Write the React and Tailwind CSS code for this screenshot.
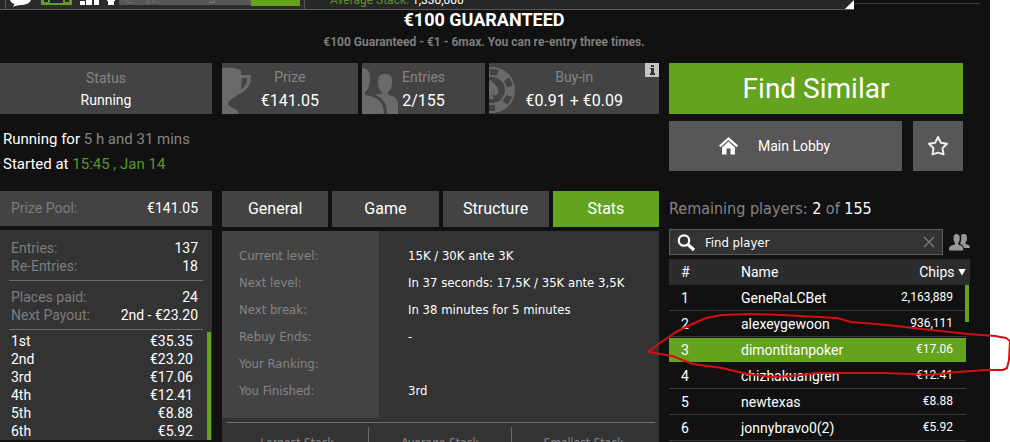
const payouts = [
  ["1st", "€35.35"],
  ["2nd", "€23.20"],
  ["3rd", "€17.06"],
  ["4th", "€12.41"],
  ["5th", "€8.88"],
  ["6th", "€5.92"],
];

const levels = [
  ["Current level:", "15K / 30K ante 3K"],
  ["Next level:", "In 37 seconds: 17,5K / 35K ante 3,5K"],
  ["Next break:", "In 38 minutes for 5 minutes"],
  ["Rebuy Ends:", "-"],
  ["Your Ranking:", ""],
  ["You Finished:", "3rd"],
];

const players = [
  ["1", "GeneRaLCBet", "2,163,889"],
  ["2", "alexeygewoon", "936,111"],
  ["3", "dimontitanpoker", "€17.06"],
  ["4", "chizhakuangren", "€12.41"],
  ["5", "newtexas", "€8.88"],
  ["6", "jonnybravo0(2)", "€5.92"],
];

function TopBar() {
  return (
    <div className="flex h-[10px] items-start justify-between">
      <div className="flex h-[10px] w-[854px] items-end overflow-hidden border-b border-[#5a5a5a] bg-[#272727]">
        <div className="ml-[5px] flex h-[9px] w-[300px] items-start border-x border-[#555] bg-[#2b2b2b]">
          <svg className="ml-[3px] h-[9px] w-[24px]" viewBox="0 0 24 9" fill="#fff">
            <path d="M1 0h21c-1 3-5 5-11 5l-7 1.500 1.500-2.500C3 3 1.500 2 1 0z" />
          </svg>
          <svg className="ml-[8px] h-[9px] w-[31px]" viewBox="0 0 31 9">
            <path d="M0 0h31v5H0z" fill="#5fa01c" />
            <path d="M3 0h4v2H3zM9 0h13v3H9zM24 0h4v2h-4z" fill="#222" />
          </svg>
          <svg className="ml-[8px] h-[9px] w-[36px]" viewBox="0 0 36 9" fill="#fff">
            <path d="M0 1h5v4H0zM6 0h6v5H6zM14 0h5v5h-5zM28 0h6v5h-6zM27 0h8v1h-8z" />
          </svg>
          <input
            aria-label="Type a message"
            defaultValue="@ Type message here"
            className="-mt-[13px] ml-[3px] h-[18px] w-[132px] bg-[#585656] px-[5px] text-[13px] text-[#777] outline-none"
          />
          <button aria-label="Send" className="-mt-[13px] h-[19px] w-[49px] bg-[#63a31d]"></button>
        </div>
        <p className="ml-[25px] h-[9px] text-[12px] leading-[1px] text-white">
          <span className="text-[#5c8f26]">Average Stack:</span> 1,330,000
        </p>
        <svg className="ml-auto h-[9px] w-[9px]" viewBox="0 0 9 9">
          <path d="M9 0v9H0z" fill="#fff" />
        </svg>
      </div>
      <div className="mt-[3px] mr-[10px] h-px flex-1 bg-[#3c3c3c]"></div>
    </div>
  );
}

function Tile({ label, value, className, children }) {
  return (
    <div className={"relative h-[51px] overflow-hidden bg-[#434343] text-center " + className}>
      {children}
      <p className="mt-[4px] text-[14px] leading-[20px] text-[#858585]">{label}</p>
      <p className="mt-[3px] text-[16px] leading-[22px] text-white">{value}</p>
    </div>
  );
}

function Summary() {
  return (
    <section className="w-[212px] shrink-0">
      <div className="h-[51px] bg-[#434343] pt-[4px] text-center text-[14px]">
        <p className="leading-[22px] text-[#858585]">Status</p>
        <p className="leading-[23px] text-white">Running</p>
      </div>
      <div className="mt-[13px] mb-[14px] pl-[3px] text-[15px] leading-[25px] text-white">
        <p>Running for <span className="text-[#858585]">5 h and 31 mins</span></p>
        <p>Started at <span className="text-[#5c9626]">15:45 , Jan 14</span></p>
      </div>
      <div className="flex h-[35px] items-center justify-between bg-[#434343] pr-[14px] pl-[11px] text-[14px]">
        <span className="text-[#7d7d7d]">Prize Pool:</span>
        <span className="text-white">€141.05</span>
      </div>
      <div className="mt-[4px] bg-[#333] pt-[9px] text-[14px] leading-[18px] text-white">
        <dl className="mx-[9px] grid grid-cols-[auto_auto] justify-between border-b border-[#6c6c6c] pr-[5px] pb-[5px] pl-[2px]">
          <dt className="text-[#7d7d7d]">Entries:</dt>
          <dd className="text-right">137</dd>
          <dt className="text-[#7d7d7d]">Re-Entries:</dt>
          <dd className="text-right">18</dd>
        </dl>
        <dl className="mx-[9px] grid grid-cols-[auto_auto] justify-between border-b border-[#6c6c6c] pt-[7px] pr-[5px] pb-[5px] pl-[2px]">
          <dt className="text-[#7d7d7d]">Places paid:</dt>
          <dd className="text-right">24</dd>
          <dt className="text-[#7d7d7d]">Next Payout:</dt>
          <dd className="text-right">2nd - €23.20</dd>
        </dl>
        <div className="mt-[2px] mr-[1px] border-r-4 border-[#63a31d] pr-[14px] pl-[11px]">
          {payouts.map(([place, prize]) => (
            <div key={place} className="flex justify-between">
              <span>{place}</span>
              <span>{prize}</span>
            </div>
          ))}
        </div>
      </div>
    </section>
  );
}

function Details() {
  const tab = "h-[36px] flex-1 text-[16px] text-white ";
  return (
    <section className="min-w-0 flex-1">
      <div className="flex gap-[4px]">
        <Tile label="Prize" value="€141.05" className="flex-[136]">
          <svg className="absolute top-0 left-0 h-[51px] w-[32px]" viewBox="0 0 32 51" fill="#6a6a6a">
            <path d="M0 5c7-1 14 0 19 2v5h10c0 10-3 15-12 19-3 3-10 5-11 10 1 3 6 4 9 6l2 4H0z" />
            <path d="M20 15h5c0 5-2 9-6 11z" fill="#434343" />
          </svg>
        </Tile>
        <Tile label="Entries" value="2/155" className="flex-[124]">
          <svg className="absolute top-0 left-0 h-[51px] w-[37px]" viewBox="0 0 37 51" fill="#6a6a6a">
            <path d="M0 5c6 0 8 4 8 9 0 8-1 12-5 15v3c12 2 19 6 19 19H0z" />
            <path d="M16 18c0-5 2-7 7-7s7 2 7 7c0 6-1 9-4 11v3c7 1 10 4 10 9v10H25c0-10-3-16-12-19 2-1 5-1 7-1v-2c-3-2-4-5-4-10z" />
          </svg>
        </Tile>
        <Tile label="Buy-in" value="€0.91 + €0.09" className="flex-[170]">
          <svg className="absolute top-0 left-0 h-[51px] w-[28px]" viewBox="0 0 28 51" fill="none">
            <circle cx="3" cy="27" r="22" stroke="#6a6a6a" strokeWidth="2" />
            <circle cx="3" cy="27" r="18" stroke="#6a6a6a" strokeWidth="7" strokeDasharray="11 8" strokeDashoffset="5" />
            <circle cx="3" cy="27" r="14" stroke="#6a6a6a" strokeWidth="2" />
            <path d="M2 17c2 4 9 7 7 13-1 3-4 3-6 1l2 5H0V18z" fill="#6a6a6a" />
          </svg>
          <button aria-label="Info" className="absolute top-0 right-0 h-[14px] w-[14px] bg-[#c4c4c4]">
            <svg viewBox="0 0 14 14" fill="#333">
              <path d="M6 2h3v2H6zM5 5h4v5h1v2H5v-2h1V6H5z" />
            </svg>
          </button>
        </Tile>
      </div>

      <div className="mt-[77px] flex gap-[4px]">
        <button className={tab + "bg-[#434343]"}>General</button>
        <button className={tab + "bg-[#434343]"}>Game</button>
        <button className={tab + "bg-[#434343]"}>Structure</button>
        <button className={tab + "bg-[#63a31d]"}>Stats</button>
      </div>

      <div className="mt-[4px] bg-[#333] font-['DejaVu_Sans_Condensed','Noto_Sans',sans-serif] text-[13px]">
        <dl>
          {levels.map(([label, value]) => (
            <div key={label} className="flex leading-[27px] first:*:pt-[11px] last:*:pb-[14px]">
              <dt className="w-[157px] bg-[#434343] pl-[17px] text-[#858585]">{label}</dt>
              <dd className="flex-1 pl-[29px] text-white">{value}</dd>
            </div>
          ))}
        </dl>
        <div className="mx-[4px] mt-[4px] grid grid-cols-3 border-t border-[#6c6c6c] pt-[4px] text-center text-[12px] text-[#858585]">
          <p className="border-r border-[#6c6c6c] pt-[6px] leading-[20px]">Largest Stack</p>
          <p className="border-r border-[#6c6c6c] pt-[6px] leading-[20px]">Average Stack</p>
          <p className="pt-[6px] leading-[20px]">Smallest Stack</p>
        </div>
      </div>
    </section>
  );
}

function Players() {
  return (
    <section className="relative w-[321px] shrink-0 text-[14px] text-white">
      <div className="mr-[27px]">
        <button className="h-[51px] w-full bg-[#63a31d] text-[28px]">Find Similar</button>
        <div className="mt-[7px] flex gap-[11px]">
          <button className="flex h-[50px] flex-1 items-center bg-[#585656] pl-[50px]">
            <svg className="mr-[20px] h-[18px] w-[19px]" viewBox="0 0 19 18" fill="#fff">
              <path d="M9.500 0l9.500 8.500-1.500 1.700-8-7.200-8 7.200L0 8.500z" />
              <path d="M9.500 4.500l6.500 6V17.500h-4.500v-6h-4v6H3v-7z" />
            </svg>
            Main Lobby
          </button>
          <button aria-label="Favourite" className="flex h-[50px] w-[50px] items-center justify-center bg-[#585656]">
            <svg className="h-[22px] w-[22px]" viewBox="0 0 22 22" fill="none" stroke="#eee" strokeWidth="2" strokeLinejoin="round">
              <path d="M11 2l2.800 5.700 6.200 1-4.500 4.400 1 6.300L11 17.600l-5.500 1.800 1-6.300L2 8.700l6.200-1z" />
            </svg>
          </button>
        </div>
      </div>

      <p className="mt-[27px] font-['DejaVu_Sans_Condensed','Noto_Sans',sans-serif] text-[16px] leading-[22px] text-[#858585]">
        Remaining players: <span className="text-white">2</span> of <span className="text-white">155</span>
      </p>

      <div className="mt-[9px] mr-[20px] flex items-center gap-[6px]">
        <label className="flex h-[26px] min-w-0 flex-1 items-center border border-[#5c5c5c] bg-[#333] pr-[7px] pl-[7px]">
          <svg className="h-[17px] w-[18px] shrink-0" viewBox="0 0 18 17" fill="none" stroke="#fff">
            <circle cx="7" cy="6.500" r="5.200" strokeWidth="2.200" />
            <path d="M11 10.500l6 5.500" strokeWidth="3.200" />
          </svg>
          <input
            aria-label="Find player"
            defaultValue="Find player"
            className="ml-[10px] min-w-0 flex-1 bg-transparent pt-[2px] font-['DejaVu_Sans_Condensed','Noto_Sans',sans-serif] text-[13px] outline-none"
          />
          <button aria-label="Clear">
            <svg className="h-[12px] w-[12px]" viewBox="0 0 12 12" stroke="#777" strokeWidth="1.500">
              <path d="M1 1l10 10M11 1L1 11" />
            </svg>
          </button>
        </label>
        <button aria-label="Friends">
          <svg className="h-[17px] w-[21px]" viewBox="0 0 21 17" fill="#999">
            <path d="M4.500 4c0-3 1-4 3-4s3.200 1 3.200 4c0 2-.5 4-1.500 5v1.500c3 1 5 1.500 5 5v1H0v-1c0-3.500 2-4 6-5V9C5 8 4.500 6 4.500 4z" />
            <path d="M12 1c1-1 2-1 3-1 2 0 3 1.500 3 4s-.5 3.500-1.500 4.500V10c3 .8 4.500 1.500 4.500 4h-6c-.6-2.500-2-3.500-4-4.300C12.500 7 12.500 3 12 1z" />
          </svg>
        </button>
      </div>

      <div className="relative mt-[4px] mr-[20px]">
        <div className="absolute top-[26px] right-px h-[37px] w-[4px] bg-[#63a31d]"></div>
        <table className="w-full border-collapse text-left">
          <thead>
            <tr className="h-[26px] bg-[#2c2c2c]">
              <th className="w-[72px] py-0 pl-[12px] font-normal">#</th>
              <th className="py-0 font-normal">Name</th>
              <th className="py-0 pr-[4px] text-right font-normal">
                Chips <span className="inline-block h-[7px] w-[8px] bg-white align-[1px] [clip-path:polygon(0_0,100%_0,50%_100%)]"></span>
              </th>
            </tr>
          </thead>
          <tbody>
            {players.map(([rank, name, chips]) => (
              <tr
                key={rank}
                className={
                  rank === "3"
                    ? "h-[26px] bg-linear-to-r from-[#63a31d] to-[#63a31d] bg-[length:297px_24px] bg-[position:0_1px] bg-no-repeat"
                    : "h-[26px] bg-linear-to-r from-[#3a3a3a] to-[#3a3a3a] bg-[length:297px_1px] bg-bottom-left bg-no-repeat"
                }
              >
                <td className="py-0 pl-[12px]">{rank}</td>
                <td className="py-0">{name}</td>
                <td className="py-0 pr-[17px] pb-[3px] text-right text-[12px]">{chips}</td>
              </tr>
            ))}
          </tbody>
        </table>
      </div>

      {/* hand-drawn ring around the third row */}
      <svg
        className="pointer-events-none absolute top-[247px] -left-[22px] h-[72px] w-[368px]"
        viewBox="0 0 368 72"
        fill="none"
        stroke="#d4100f"
        strokeWidth="2"
        strokeLinejoin="round"
      >
        <path d="M2 41L13 33 29 22 43 15 59 8 75 5 105 4 135 5 190 8 204 12 240 15 275 19 321 24 348 26 359 28 363 31 362 50 360 58 356 60 340 60 310 62 282 65 265 64 235 63 170 63 145 66 125 67 100 64 75 58 46 54 25 46 2 42z" />
      </svg>
    </section>
  );
}

function App() {
  return (
    <div className="h-screen overflow-hidden bg-white font-[Roboto,sans-serif]">
      <div className="mr-5 h-full bg-[#111]">
        <TopBar />
        <header className="mr-[22px] pb-[11px] text-center">
          <h1 className="text-[18px] leading-[20px] font-bold text-white">€100 GUARANTEED</h1>
          <p className="mt-[3px] text-[12px] leading-[19px] font-bold text-[#7d7d7d]">
            €100 Guaranteed - €1 - 6max. You can re-entry three times.
          </p>
        </header>
        <main className="flex gap-[10px]">
          <Summary />
          <Details />
          <Players />
        </main>
      </div>
    </div>
  );
}

export default App;
